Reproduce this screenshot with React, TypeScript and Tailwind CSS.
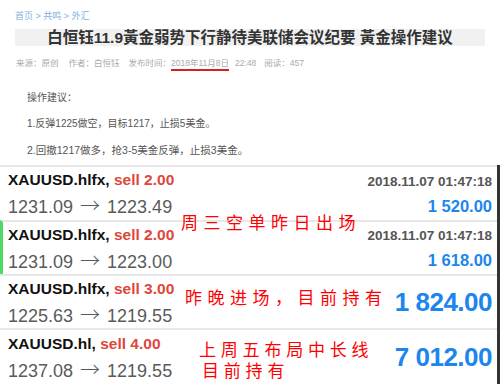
const trades = [
  { symbol: "XAUUSD.hlfx", side: "sell 2.00", from: "1231.09", to: "1223.49", time: "2018.11.07 01:47:18", amount: "1 520.00", h: "h-[55px]" },
  { symbol: "XAUUSD.hlfx", side: "sell 2.00", from: "1231.09", to: "1223.00", time: "2018.11.07 01:47:18", amount: "1 618.00", h: "h-[54px]", active: true },
  { symbol: "XAUUSD.hlfx", side: "sell 3.00", from: "1225.63", to: "1219.55", amount: "1 824.00", h: "h-[54px]" },
  { symbol: "XAUUSD.hl", side: "sell 4.00", from: "1237.08", to: "1219.55", amount: "7 012.00", h: "flex-1" },
];

type Trade = (typeof trades)[number];

function TradeRow({ t }: { t: Trade }) {
  return (
    <div
      className={`flex items-center justify-between border-t-2 border-[#e8e8e8] pr-[5px] ${t.h} ${
        t.active ? "border-l-[3px] border-l-[#4cd964] pl-[5px]" : "pl-[8px]"
      }`}
    >
      <div className="leading-[25px]">
        <div className="text-[15.5px] font-bold text-[#111]">
          {t.symbol}, <span className="text-[#e0463c]">{t.side}</span>
        </div>
        <div className="text-[18px] text-[#5a5a5a]">
          {t.from}
          <span className="mx-[7px] font-['Noto_Sans_CJK_SC',sans-serif] text-[20px] font-light">→</span>
          {t.to}
        </div>
      </div>
      {t.time ? (
        <div className="text-right leading-[25px]">
          <div className="text-[13.5px] font-bold text-[#555]">{t.time}</div>
          <div className="text-[16.5px] font-bold text-[#1c86ee]">{t.amount}</div>
        </div>
      ) : (
        <div className="text-[26px] font-bold tracking-[-0.5px] text-[#1c86ee]">{t.amount}</div>
      )}
    </div>
  );
}

export default function App() {
  return (
    <div className="relative h-[384px] w-[500px] overflow-hidden bg-white font-['Liberation_Sans','Noto_Sans_CJK_SC',sans-serif]">
      <section className="h-[165px] px-[15px] pt-[11px]">
        <div className="text-[9px] leading-[10px] text-[#7fb0dc]">
          首页 &gt; 共鸣 &gt; 外汇
        </div>
        <h1 className="mt-[8px] h-[17px] bg-[#f1f1f1] text-center text-[15.5px] font-bold leading-[17px] text-[#333]">
          白恒钰11.9黃金弱势下行静待美联储会议纪要 黃金操作建议
        </h1>
        <div className="mt-[12px] flex items-start text-[8.5px] leading-[10px] text-[#aaa]">
          <span className="ml-[1px]">来源：原创</span>
          <span className="ml-[10px]">作者：白恒钰</span>
          <span className="ml-[9px]">发布时间：</span>
          <span className="border-b-2 border-[#d42020] pb-[1px]">2018年11月8日</span>
          <span className="ml-[6px]">22:48</span>
          <span className="ml-[8px]">阅读：457</span>
        </div>
        <div className="mt-[14px] pl-[12px] text-[10.5px] leading-[26px] text-[#555]">
          <p className="text-[10px]">操作建议：</p>
          <p className="text-[10px]">1.反弹1225做空，目标1217，止损5美金。</p>
          <p>2.回撤1217做多，抢3-5美金反弹，止损3美金。</p>
        </div>
      </section>
      <div className="flex h-[219px] flex-col border-r-[3px] border-[#333]">
        {trades.map((t, i) => (
          <TradeRow key={i} t={t} />
        ))}
      </div>

      <div className="absolute left-[181px] top-[215px] text-[17px] leading-[18px] tracking-[5.5px] text-[#f00]">
        周三空单昨日出场
      </div>
      <div className="absolute left-[185px] top-[290px] text-[17px] leading-[18px] tracking-[5.5px] text-[#f00]">
        昨晚进场，目前持有
      </div>
      <div className="absolute left-[199px] top-[340px] text-[17px] leading-[21px] tracking-[4.8px] text-[#f00]">
        上周五布局中长线
        <br />
        <span className="ml-[3px]">目前持有</span>
      </div>
    </div>
  );
}
